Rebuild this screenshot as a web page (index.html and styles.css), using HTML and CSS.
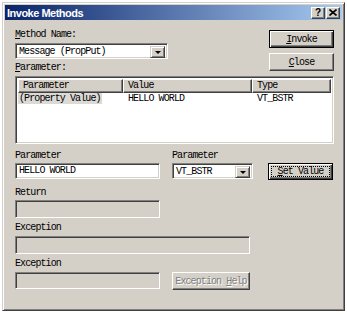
FILE: index.html
```html
<!DOCTYPE html>
<html lang="en">
<head>
    <meta charset="UTF-8">
    <title>Invoke Methods</title>
    <link rel="stylesheet" href="styles.css">
</head>
<body>
    <div class="window">
        <div class="titlebar">
            <span class="title">Invoke Methods</span>
            <div class="caption-btns">
                <span class="cap-btn">?</span>
                <span class="cap-btn">
                    <svg width="8" height="7" viewBox="0 0 8 7">
                        <path d="M0.5 0.5 L7.5 6.5 M7.5 0.5 L0.5 6.5" stroke="#000" stroke-width="1.6" fill="none"/>
                    </svg>
                </span>
            </div>
        </div>

        <div class="client">
            <div class="top">
                <div class="top-left">
                    <div class="label"><u>M</u>ethod Name:</div>
                    <div class="field combo method">
                        <span class="combo-text">Message (PropPut)</span>
                        <span class="drop"><i class="arrow"></i></span>
                    </div>
                    <div class="label param-label"><u>P</u>arameter:</div>
                </div>
                <div class="btn-col">
                    <div class="btn default"><span><u>I</u>nvoke</span></div>
                    <div class="btn"><span><u>C</u>lose</span></div>
                </div>
            </div>

            <div class="listview">
                <div class="lv-head">
                    <div class="lv-col c1">Parameter</div>
                    <div class="lv-col c2">Value</div>
                    <div class="lv-col c3">Type</div>
                </div>
                <div class="lv-row">
                    <div class="lv-cell c1"><span class="selected">(Property Value)</span></div>
                    <div class="lv-cell c2">HELLO WORLD</div>
                    <div class="lv-cell c3">VT_BSTR</div>
                </div>
            </div>

            <div class="param-grid">
                <div class="label">Parameter</div>
                <div class="label">Parameter</div>
                <div></div>
                <div class="field text short">HELLO WORLD</div>
                <div class="field combo type">
                    <span class="combo-text">VT_BSTR</span>
                    <span class="drop"><i class="arrow"></i></span>
                </div>
                <div class="btn focused"><span class="focus-rect"><u>S</u>et Value</span></div>
            </div>

            <div class="label gap-big">Return</div>
            <div class="field disabled short tall"></div>

            <div class="label gap-small">Exception</div>
            <div class="field disabled long tall"></div>

            <div class="label gap-small">Exception</div>
            <div class="exc-row">
                <div class="field disabled short"></div>
                <div class="btn disabled-btn"><span>Exception <u>H</u>elp</span></div>
            </div>
        </div>
    </div>
</body>
</html>
```

FILE: styles.css
```css
* {
    box-sizing: border-box;
}
body {
    margin: 0;
    background-color: #ffffff;
    font-family: "Liberation Mono", "DejaVu Sans Mono", monospace;
    font-size: 10px;
    letter-spacing: -0.9px;
    color: #000;
}
u {
    text-decoration: underline;
    text-underline-offset: 1px;
}

/* window frame */
.window {
    width: 343px;
    height: 309px;
    margin: 2px 0 0 2px;
    padding: 2px;
    background-color: #d4d0c8;
    border: 1px solid;
    border-color: #d4d0c8 #404040 #404040 #d4d0c8;
    box-shadow: inset 1px 1px #fff, inset -1px -1px #808080;
}
.titlebar {
    height: 15px;
    display: flex;
    align-items: center;
    justify-content: space-between;
    background: linear-gradient(to right, #0a246a, #a6caf0);
}
.title {
    padding-left: 2px;
    font-family: "Liberation Sans", Arial, sans-serif;
    font-weight: bold;
    font-size: 11px;
    letter-spacing: -0.5px;
    color: #fff;
}
.caption-btns {
    display: flex;
    gap: 1px;
    margin-right: 2px;
}
.cap-btn {
    width: 14px;
    height: 12px;
    display: flex;
    align-items: center;
    justify-content: center;
    background-color: #d4d0c8;
    border: 1px solid;
    border-color: #fff #404040 #404040 #fff;
    box-shadow: inset -1px -1px #808080;
    font-family: "Liberation Sans", Arial, sans-serif;
    font-weight: bold;
    font-size: 10px;
    letter-spacing: 0;
}

.client {
    padding: 9px 8px 0 10px;
}
.label {
    height: 12px;
    line-height: 12px;
    white-space: nowrap;
}

/* top area */
.top {
    display: flex;
    justify-content: space-between;
}
.top-left {
    width: 153px;
}
.param-label {
    margin-top: 3px;
}
.btn-col {
    margin-top: 1px;
    display: flex;
    flex-direction: column;
    gap: 5px;
}

/* sunken fields */
.field {
    height: 16px;
    background-color: #fff;
    border: 1px solid;
    border-color: #808080 #fff #fff #808080;
    box-shadow: inset 1px 1px #404040, inset -1px -1px #d4d0c8;
    line-height: 14px;
    padding-left: 3px;
    white-space: nowrap;
}
.field.disabled {
    background-color: #d4d0c8;
}
.field.tall {
    height: 18px;
}
.combo {
    display: flex;
    justify-content: space-between;
    padding: 2px 2px 2px 2px;
    line-height: 12px;
}
.combo-text {
    padding-left: 1px;
}
.method {
    margin-top: 2px;
}
.drop {
    width: 15px;
    height: 12px;
    display: flex;
    align-items: center;
    justify-content: center;
    background-color: #d4d0c8;
    border: 1px solid;
    border-color: #d4d0c8 #404040 #404040 #d4d0c8;
    box-shadow: inset 1px 1px #fff, inset -1px -1px #808080;
}
.arrow {
    width: 0;
    height: 0;
    border-left: 3px solid transparent;
    border-right: 3px solid transparent;
    border-top: 3px solid #000;
}

/* buttons */
.btn {
    width: 65px;
    height: 18px;
    display: flex;
    align-items: center;
    justify-content: center;
    background-color: #d4d0c8;
    border: 1px solid;
    border-color: #fff #404040 #404040 #fff;
    box-shadow: inset -1px -1px #808080;
    white-space: nowrap;
}
.btn.default {
    border-color: #000;
    box-shadow: inset 1px 1px #fff, inset -1px -1px #404040, inset -2px -2px #808080;
}
.btn.focused {
    height: 17px;
    padding: 3px;
    border-color: #000;
    box-shadow: inset 1px 1px #fff, inset -1px -1px #404040, inset -2px -2px #808080;
}
.focus-rect {
    flex: 1;
    height: 100%;
    line-height: 9px;
    text-align: center;
    outline: 1px dotted #000;
    outline-offset: 0;
}
.disabled-btn {
    width: 78px;
    color: #808080;
    text-shadow: 1px 1px #fff;
}

/* list view */
.listview {
    margin-top: 2px;
    height: 68px;
    background-color: #fff;
    border: 1px solid;
    border-color: #808080 #fff #fff #808080;
    box-shadow: inset 1px 1px #404040, inset -1px -1px #d4d0c8;
    padding: 2px;
}
.lv-head,
.lv-row {
    display: flex;
}
.lv-col {
    height: 14px;
    line-height: 12px;
    padding-left: 4px;
    background-color: #d4d0c8;
    border: 1px solid;
    border-color: #fff #404040 #404040 #fff;
    box-shadow: inset -1px -1px #808080;
}
.c1 { width: 105px; }
.c2 { width: 129px; }
.c3 { flex: 1; }
.lv-cell {
    height: 12px;
    line-height: 12px;
    padding-left: 5px;
    white-space: nowrap;
}
.lv-cell.c1 {
    padding-left: 0;
}
.selected {
    background-color: #dcdad5;
    padding: 0 1px;
}

/* parameter row */
.param-grid {
    margin-top: 6px;
    display: grid;
    grid-template-columns: 157px 96px 66px;
    row-gap: 1px;
}
.short { width: 145px; }
.type { width: 81px; }
.long { width: 235px; }
.gap-big { margin-top: 7px; margin-bottom: 1px; }
.gap-small { margin-top: 4px; margin-bottom: 2px; }
.exc-row {
    display: grid;
    grid-template-columns: 157px 96px;
}
.exc-row .field {
    height: 17px;
}
```
